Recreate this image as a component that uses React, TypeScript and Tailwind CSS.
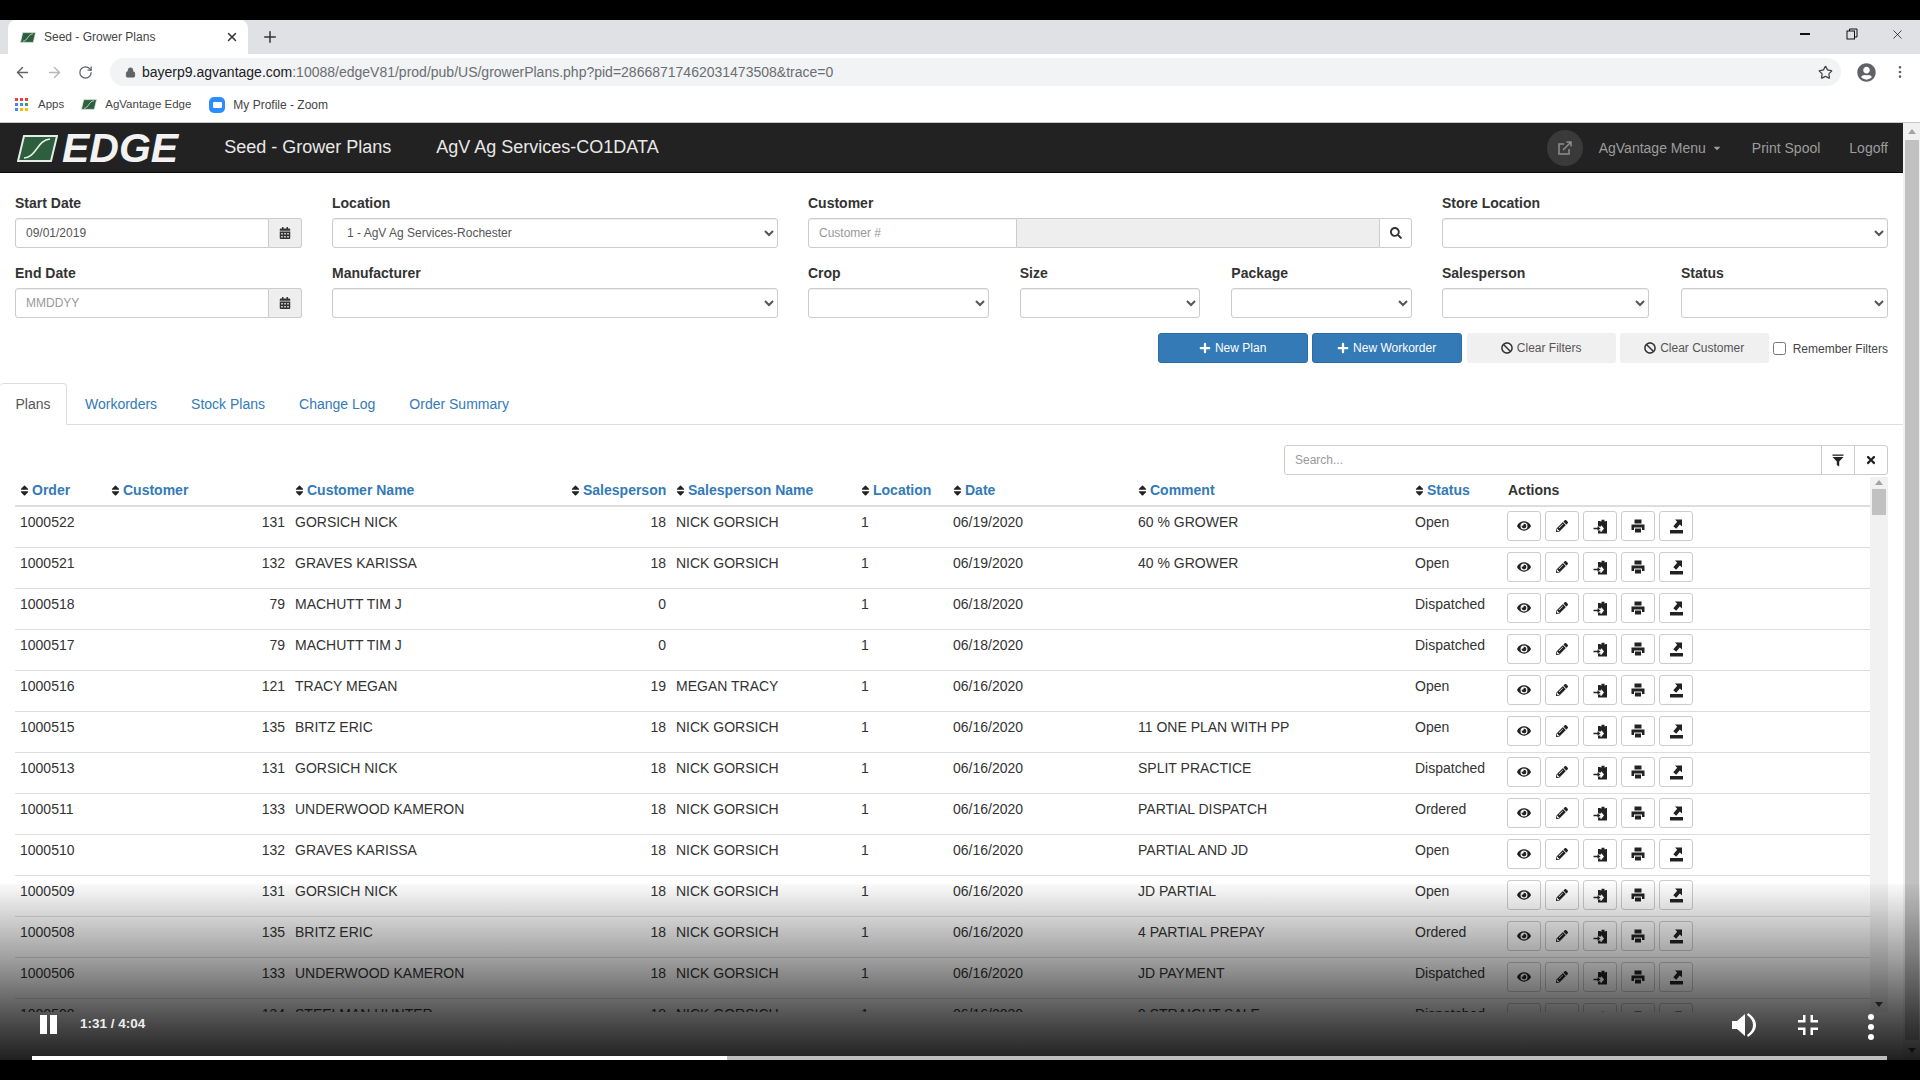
import * as React from "react";
import {
  ArrowLeft,
  ArrowRight,
  Lock,
  MoreVertical,
  Plus as PlusIcon,
  RotateCw,
  Star,
  X,
} from "lucide-react";
import {
  FaBan,
  FaCalendarAlt,
  FaCaretDown,
  FaEye,
  FaPencilAlt,
  FaPlus,
  FaSearch,
  FaSort,
  FaTimes,
  FaUserCircle,
} from "react-icons/fa";

const COLS =
  "grid grid-cols-[91px_184px_276px_105px_185px_92px_185px_277px_93px_367px]";

interface Plan {
  order: string;
  cust: string;
  name: string;
  sp: string;
  spName: string;
  date: string;
  comment: string;
  status: string;
}

const plans: Plan[] = [
  { order: "1000522", cust: "131", name: "GORSICH NICK", sp: "18", spName: "NICK GORSICH", date: "06/19/2020", comment: "60 % GROWER", status: "Open" },
  { order: "1000521", cust: "132", name: "GRAVES KARISSA", sp: "18", spName: "NICK GORSICH", date: "06/19/2020", comment: "40 % GROWER", status: "Open" },
  { order: "1000518", cust: "79", name: "MACHUTT TIM J", sp: "0", spName: "", date: "06/18/2020", comment: "", status: "Dispatched" },
  { order: "1000517", cust: "79", name: "MACHUTT TIM J", sp: "0", spName: "", date: "06/18/2020", comment: "", status: "Dispatched" },
  { order: "1000516", cust: "121", name: "TRACY MEGAN", sp: "19", spName: "MEGAN TRACY", date: "06/16/2020", comment: "", status: "Open" },
  { order: "1000515", cust: "135", name: "BRITZ ERIC", sp: "18", spName: "NICK GORSICH", date: "06/16/2020", comment: "11 ONE PLAN WITH PP", status: "Open" },
  { order: "1000513", cust: "131", name: "GORSICH NICK", sp: "18", spName: "NICK GORSICH", date: "06/16/2020", comment: "SPLIT PRACTICE", status: "Dispatched" },
  { order: "1000511", cust: "133", name: "UNDERWOOD KAMERON", sp: "18", spName: "NICK GORSICH", date: "06/16/2020", comment: "PARTIAL DISPATCH", status: "Ordered" },
  { order: "1000510", cust: "132", name: "GRAVES KARISSA", sp: "18", spName: "NICK GORSICH", date: "06/16/2020", comment: "PARTIAL AND JD", status: "Open" },
  { order: "1000509", cust: "131", name: "GORSICH NICK", sp: "18", spName: "NICK GORSICH", date: "06/16/2020", comment: "JD PARTIAL", status: "Open" },
  { order: "1000508", cust: "135", name: "BRITZ ERIC", sp: "18", spName: "NICK GORSICH", date: "06/16/2020", comment: "4 PARTIAL PREPAY", status: "Ordered" },
  { order: "1000506", cust: "133", name: "UNDERWOOD KAMERON", sp: "18", spName: "NICK GORSICH", date: "06/16/2020", comment: "JD PAYMENT", status: "Dispatched" },
  { order: "1000500", cust: "134", name: "STEELMAN HUNTER", sp: "18", spName: "NICK GORSICH", date: "06/16/2020", comment: "9 STRAIGHT SALE", status: "Dispatched" },
];

const Favicon = () => (
  <svg width="16" height="13" viewBox="0 0 41 27">
    <path d="M7 1H40L34 26H1Z" fill="#2d5e3e" stroke="#dfe9df" strokeWidth="2" />
    <path d="M8 23C19 23 20 5 33 4" fill="none" stroke="#e6efe6" strokeWidth="2" />
  </svg>
);

// glyphicon style clipboard with an arrow going in
const ClipboardIn = () => (
  <svg width="15" height="15" viewBox="0 0 15 15" fill="#222">
    <path d="M7.5 2.5H8.5V0.8H11.5V2.5H12.5V2H14V14.5H5V11.5H7.5V13H8.2L11 9.5L8.2 6V7.5H5V2H7.5Z" />
    <path d="M0.5 8.8H4.5V7.2L7.6 9.5L4.5 11.8V10.2H0.5Z" />
  </svg>
);

const ExportIcon = () => (
  <svg width="15" height="15" viewBox="0 0 15 15" fill="#222">
    <path d="M1 11H14V14.5H1Z" />
    <path d="M6 0.5H13V7.5L10.8 5.4L7.2 9.8L4.3 7.2L8.2 2.8Z" />
  </svg>
);

const PrintIcon = () => (
  <svg width="14" height="14" viewBox="0 0 14 14" fill="#222">
    <path d="M3.5 0.5H10.5V4.5H3.5Z" />
    <path d="M0.5 5.5H13.5V11H11V8.5H3V11H0.5Z" />
    <path d="M4 9.5H10V13.5H4Z" />
  </svg>
);

const FilterIcon = () => (
  <svg width="12" height="13" viewBox="0 0 12 13" fill="#222">
    <path d="M0.5 0.5H11.5V1.8H0.5Z" />
    <path d="M0.5 3H11.5L7.2 7.5V12.5L4.8 11V7.5Z" />
  </svg>
);

const Field = ({ label, children }: { label: string; children: React.ReactNode }) => (
  <div className="min-w-0">
    <div className="h-[20px] text-[14px] leading-[20px] font-bold text-[#333] mb-[5px]">{label}</div>
    {children}
  </div>
);

const Select = ({ value }: { value?: string }) => (
  <select
    defaultValue={value}
    className="block w-full h-[30px] bg-white border border-[#ccc] rounded-[3px] pl-[10px] pr-[5px] text-[12px] text-[#555] shadow-[inset_0_1px_1px_rgba(0,0,0,0.075)]"
  >
    <option>{value}</option>
  </select>
);

const DateInput = ({ value }: { value?: string }) => (
  <div className="flex h-[30px]">
    <input
      readOnly
      value={value ?? ""}
      placeholder="MMDDYY"
      className="flex-1 min-w-0 border border-[#ccc] rounded-l-[3px] px-[10px] text-[12px] text-[#555] placeholder:text-[#999] shadow-[inset_0_1px_1px_rgba(0,0,0,0.075)]"
    />
    <div className="w-[33px] flex items-center justify-center bg-[#eee] border border-l-0 border-[#ccc] rounded-r-[3px] text-[#333] text-[12px]">
      <FaCalendarAlt />
    </div>
  </div>
);

const ActionBtn = ({ children }: { children: React.ReactNode }) => (
  <div className="w-[34px] h-[30px] flex items-center justify-center bg-white border border-[#ccc] rounded-[3px] text-[#222]">
    {children}
  </div>
);

const Th = ({ label }: { label: string }) => (
  <div className="px-[5px] flex items-center gap-[1px] text-[14px] font-bold text-[#337ab7]">
    <FaSort className="-ml-[2px] text-[#222] text-[13px] shrink-0" />
    {label}
  </div>
);

const Row = ({ p }: { p: Plan }) => (
  <div className={COLS + " h-[41px] border-b border-[#ddd] text-[14px] leading-[20px] text-[#333]"}>
    <div className="px-[5px] pt-[5px]">{p.order}</div>
    <div className="px-[5px] pt-[5px] text-right">{p.cust}</div>
    <div className="px-[5px] pt-[5px]">{p.name}</div>
    <div className="px-[5px] pt-[5px] text-right">{p.sp}</div>
    <div className="px-[5px] pt-[5px]">{p.spName}</div>
    <div className="px-[5px] pt-[5px]">1</div>
    <div className="px-[5px] pt-[5px]">{p.date}</div>
    <div className="px-[5px] pt-[5px]">{p.comment}</div>
    <div className="px-[5px] pt-[5px]">{p.status}</div>
    <div className="px-[4px] pt-[4px] flex gap-[4px]">
      <ActionBtn><FaEye className="text-[14px]" /></ActionBtn>
      <ActionBtn><FaPencilAlt className="text-[12px]" /></ActionBtn>
      <ActionBtn><ClipboardIn /></ActionBtn>
      <ActionBtn><PrintIcon /></ActionBtn>
      <ActionBtn><ExportIcon /></ActionBtn>
    </div>
  </div>
);

const App: React.FC = () => {
  return (
    <div className="relative w-[1920px] h-[1080px] overflow-hidden flex flex-col bg-black font-['Liberation_Sans',Arial,sans-serif]">
      <div className="h-[20px] shrink-0 bg-black" />

      {/* browser tabs */}
      <div className="h-[34px] shrink-0 bg-[#dfe1e5] flex items-end pl-[8px]">
        <div className="w-[240px] h-[34px] bg-white rounded-t-[8px] flex items-center pl-[12px] pr-[9px] text-[12px] text-[#444]">
          <Favicon />
          <span className="ml-[8px] flex-1">Seed - Grower Plans</span>
          <X size={14} strokeWidth={2.5} className="text-[#333]" />
        </div>
        <div className="h-[34px] flex items-center ml-[13px]">
          <PlusIcon size={18} strokeWidth={2} className="text-[#333]" />
        </div>
        <div className="flex-1" />
        <div className="h-[28px] self-start flex items-center pr-[15px] text-[#111]">
          <div className="w-[10px] h-[1.5px] bg-[#111]" />
          <svg className="ml-[36px]" width="12" height="12" viewBox="0 0 12 12" fill="none" stroke="#111">
            <rect x="1" y="3" width="7.5" height="8" />
            <path d="M3.5 3V1H11V9H8.5" />
          </svg>
          <X size={15} strokeWidth={1.2} className="ml-[32px]" />
        </div>
      </div>

      {/* address bar */}
      <div className="h-[35px] shrink-0 pt-[1px] bg-white flex items-center text-[#5f6368]">
        <div className="w-[110px] flex items-center pl-[14px] gap-[15px]">
          <ArrowLeft size={17} />
          <ArrowRight size={17} className="text-[#b5b7ba]" />
          <RotateCw size={15} />
        </div>
        <div className="w-[1731px] h-[28px] rounded-[14px] bg-[#f1f3f4] flex items-center pl-[15px] pr-[8px] text-[14px]">
          <Lock size={11} fill="#5f6368" className="mr-[6px]" />
          <span className="text-[#202124]">bayerp9.agvantage.com</span>
          <span className="text-[#6b6e72]">:10088/edgeV81/prod/pub/US/growerPlans.php?pid=28668717462031473508&amp;trace=0</span>
          <div className="flex-1" />
          <Star size={15} className="text-[#444]" />
        </div>
        <FaUserCircle className="ml-[16px] text-[19px] text-[#5f6368]" />
        <MoreVertical size={16} className="ml-[16px]" />
      </div>

      {/* bookmarks */}
      <div className="h-[34px] shrink-0 bg-white flex items-center pl-[15px] pb-[2px] text-[11.5px] text-[#444] border-b border-[#c8c8c8]">
        <div className="w-[13px] h-[13px] grid grid-cols-3 gap-[2px]">
          {["#ea4335", "#ea4335", "#ea4335", "#4285f4", "#4285f4", "#34a853", "#4285f4", "#fbbc05", "#fbbc05"].map((c, i) => (
            <div key={i} className="w-[3px] h-[3px]" style={{ backgroundColor: c }} />
          ))}
        </div>
        <span className="ml-[10px]">Apps</span>
        <div className="ml-[17px]"><Favicon /></div>
        <span className="ml-[8px]">AgVantage Edge</span>
        <div className="ml-[18px] w-[16px] h-[16px] rounded-[5px] bg-[#2d8cff] flex items-center justify-center">
          <div className="w-[9px] h-[6px] bg-white rounded-[1px]" />
        </div>
        <span className="ml-[8px] text-[12px]">My Profile - Zoom</span>
      </div>

      {/* page */}
      <div className="flex-1 min-h-0 flex bg-white">
        <div className="flex-1 min-w-0 flex flex-col">
          <div className="h-[50px] shrink-0 bg-[#222] flex items-center pl-[17px] pr-[15px] border-b border-[#080808]">
            <svg width="41" height="27" viewBox="0 0 41 27" className="mt-[1px]">
              <path d="M7 1H40L34 26H1Z" fill="#2d5e3e" stroke="#e4ece4" strokeWidth="2" />
              <path d="M7 23C19 23 20 5 33 4" fill="none" stroke="#e6efe6" strokeWidth="1.6" />
            </svg>
            <span className="ml-[4px] mt-[2px] text-[41px] leading-none font-bold italic text-[#f2f2f2]">EDGE</span>
            <span className="ml-[46px] text-[18px] text-[#e8e8e8]">Seed - Grower Plans</span>
            <span className="ml-[45px] text-[18px] text-[#e8e8e8]">AgV Ag Services-CO1DATA</span>
            <div className="flex-1" />
            <div className="w-[36px] h-[36px] rounded-full bg-[#3a3a3a] flex items-center justify-center">
              <svg width="16" height="16" viewBox="0 0 16 16" fill="none" stroke="#8f8f8f" strokeWidth="1.5">
                <path d="M12 9V14H2V4H7" />
                <path d="M6 10L14 2M9.5 2H14V6.5" />
              </svg>
            </div>
            <span className="ml-[16px] mt-[1px] text-[14px] text-[#9d9d9d] flex items-center gap-[6px]">
              AgVantage Menu <FaCaretDown className="text-[10px]" />
            </span>
            <span className="ml-[30px] mt-[1px] text-[14px] text-[#9d9d9d]">Print Spool</span>
            <span className="ml-[29px] mt-[1px] text-[14px] text-[#9d9d9d]">Logoff</span>
          </div>

          <div className="pl-[15px] pr-[15px] pt-[20px] grid grid-cols-[287px_446px_604px_446px] gap-x-[30px] gap-y-[15px]">
            <Field label="Start Date"><DateInput value="09/01/2019" /></Field>
            <Field label="Location"><Select value="1 - AgV Ag Services-Rochester" /></Field>
            <Field label="Customer">
              <div className="flex h-[30px]">
                <input
                  readOnly
                  placeholder="Customer #"
                  className="w-[209px] border border-[#ccc] rounded-l-[3px] px-[10px] text-[12px] placeholder:text-[#999] shadow-[inset_0_1px_1px_rgba(0,0,0,0.075)]"
                />
                <div className="flex-1 bg-[#eee] border-y border-[#ccc]" />
                <div className="w-[33px] flex items-center justify-center bg-white border border-[#ccc] rounded-r-[3px] text-[#333] text-[12px]">
                  <FaSearch />
                </div>
              </div>
            </Field>
            <Field label="Store Location"><Select /></Field>
            <Field label="End Date"><DateInput /></Field>
            <Field label="Manufacturer"><Select /></Field>
            <div className="grid grid-cols-3 gap-x-[31px]">
              <Field label="Crop"><Select /></Field>
              <Field label="Size"><Select /></Field>
              <Field label="Package"><Select /></Field>
            </div>
            <div className="grid grid-cols-2 gap-x-[32px]">
              <Field label="Salesperson"><Select /></Field>
              <Field label="Status"><Select /></Field>
            </div>
          </div>

          <div className="mt-[15px] pr-[15px] flex justify-end items-center gap-[4px] text-[12px]">
            <div className="w-[150px] h-[30px] flex items-center justify-center gap-[4px] bg-[#337ab7] border border-[#2e6da4] rounded-[3px] text-white">
              <FaPlus className="text-[12px]" /> New Plan
            </div>
            <div className="w-[150px] h-[30px] flex items-center justify-center gap-[4px] bg-[#337ab7] border border-[#2e6da4] rounded-[3px] text-white">
              <FaPlus className="text-[12px]" /> New Workorder
            </div>
            <div className="ml-[1px] w-[149px] h-[30px] flex items-center justify-center gap-[4px] bg-[#f0f0f0] rounded-[3px] text-[#555]">
              <FaBan className="text-[12px] text-[#333]" /> Clear Filters
            </div>
            <div className="w-[149px] h-[30px] flex items-center justify-center gap-[4px] bg-[#f0f0f0] rounded-[3px] text-[#555]">
              <FaBan className="text-[12px] text-[#333]" /> Clear Customer
            </div>
            <label className="flex items-center gap-[7px] text-[#444] pt-[1px]">
              <input type="checkbox" className="w-[13px] h-[13px] m-0" />
              Remember Filters
            </label>
          </div>

          <div className="mt-[20px] h-[42px] shrink-0 flex border-b border-[#ddd] text-[14px] text-[#337ab7]">
            <div className="h-[42px] w-[67px] pt-[1px] flex items-center justify-center bg-white border border-[#ddd] border-b-white border-l-0 rounded-t-[4px] text-[#555]">Plans</div>
            <div className="ml-[18px] pt-[1px] flex items-center">Workorders</div>
            <div className="ml-[34px] pt-[1px] flex items-center">Stock Plans</div>
            <div className="ml-[34px] pt-[1px] flex items-center">Change Log</div>
            <div className="ml-[34px] pt-[1px] flex items-center">Order Summary</div>
          </div>

          <div className="mt-[20px] pr-[15px] flex justify-end">
            <div className="w-[604px] h-[30px] flex border border-[#ccc] rounded-[3px] text-[12px]">
              <input readOnly placeholder="Search..." className="flex-1 min-w-0 px-[10px] placeholder:text-[#999]" />
              <div className="w-[33px] flex items-center justify-center border-l border-[#ccc]"><FilterIcon /></div>
              <div className="w-[33px] flex items-center justify-center border-l border-[#ccc] text-[#222] text-[12px]"><FaTimes /></div>
            </div>
          </div>

          <div className="h-[535px] ml-[15px] mr-[15px] mt-[2px] flex overflow-hidden">
            <div className="w-[1855px] shrink-0">
              <div className={COLS + " h-[30px] pb-[2px] border-b-2 border-[#ddd]"}>
                <Th label="Order" />
                <Th label="Customer" />
                <Th label="Customer Name" />
                <Th label="Salesperson" />
                <Th label="Salesperson Name" />
                <Th label="Location" />
                <Th label="Date" />
                <Th label="Comment" />
                <Th label="Status" />
                <div className="px-[5px] flex items-center text-[14px] font-bold text-[#333]">Actions</div>
              </div>
              {plans.map((p) => (
                <Row key={p.order} p={p} />
              ))}
            </div>
            <div className="flex-1 bg-[#f1f1f1] flex flex-col items-center pt-[3px]">
              <div className="w-0 h-0 border-x-[4px] border-x-transparent border-b-[5px] border-b-[#a3a3a3]" />
              <div className="mt-[4px] w-[14px] h-[26px] bg-[#c1c1c1]" />
              <div className="flex-1" />
              <div className="mb-[5px] w-0 h-0 border-x-[4px] border-x-transparent border-t-[5px] border-t-[#505050]" />
            </div>
          </div>
        </div>

        {/* page scrollbar */}
        <div className="w-[17px] shrink-0 bg-[#f1f1f1] flex flex-col items-center pt-[6px]">
          <div className="w-0 h-0 border-x-[4px] border-x-transparent border-b-[5px] border-b-[#a3a3a3]" />
          <div className="mt-[6px] w-[14px] h-[900px] bg-[#c1c1c1]" />
          <div className="flex-1" />
          <div className="mb-[7px] w-0 h-0 border-x-[4px] border-x-transparent border-t-[5px] border-t-[#505050]" />
        </div>
      </div>

      <div className="h-[20px] shrink-0 bg-black" />

      {/* video player over the page */}
      <div className="absolute left-0 right-0 bottom-[20px] h-[176px] bg-[linear-gradient(to_bottom,rgba(0,0,0,0.02),rgba(0,0,0,0.4)_45%,rgba(0,0,0,0.68)_75%,rgba(0,0,0,0.88))]">
        <div className="absolute left-[40px] top-[131px] w-[7px] h-[19px] bg-white" />
        <div className="absolute left-[50px] top-[131px] w-[7px] h-[19px] bg-white" />
        <div className="absolute left-[80px] top-[131px] text-[13.5px] leading-[18px] font-bold text-[#eee]">1:31 / 4:04</div>
        <svg className="absolute left-[1731px] top-[128px]" width="26" height="26" viewBox="0 0 26 26" fill="white">
          <path d="M1 9H6L14 2V24L6 17H1Z" />
          <path d="M17 1C23 5 25 9 25 13C25 17 23 21 17 25L16 23C20 20 22 17 22 13C22 9 20 6 16 3Z" />
        </svg>
        <svg className="absolute left-[1798px] top-[131px]" width="20" height="20" viewBox="0 0 20 20" fill="white">
          <path d="M5 0H7.5V7.5H0V5H5ZM12.5 0H15V5H20V7.5H12.5ZM0 12.5H7.5V20H5V15H0ZM12.5 12.5H20V15H15V20H12.5Z" />
        </svg>
        <div className="absolute left-[1868px] top-[130px] flex flex-col gap-[4px]">
          <div className="w-[6px] h-[6px] rounded-full bg-white" />
          <div className="w-[6px] h-[6px] rounded-full bg-white" />
          <div className="w-[6px] h-[6px] rounded-full bg-white" />
        </div>
        <div className="absolute left-[32px] bottom-0 h-[4px] w-[695px] bg-white" />
        <div className="absolute left-[727px] bottom-0 h-[4px] w-[1160px] bg-[#bdbdbd]" />
      </div>
    </div>
  );
};

export default App;
